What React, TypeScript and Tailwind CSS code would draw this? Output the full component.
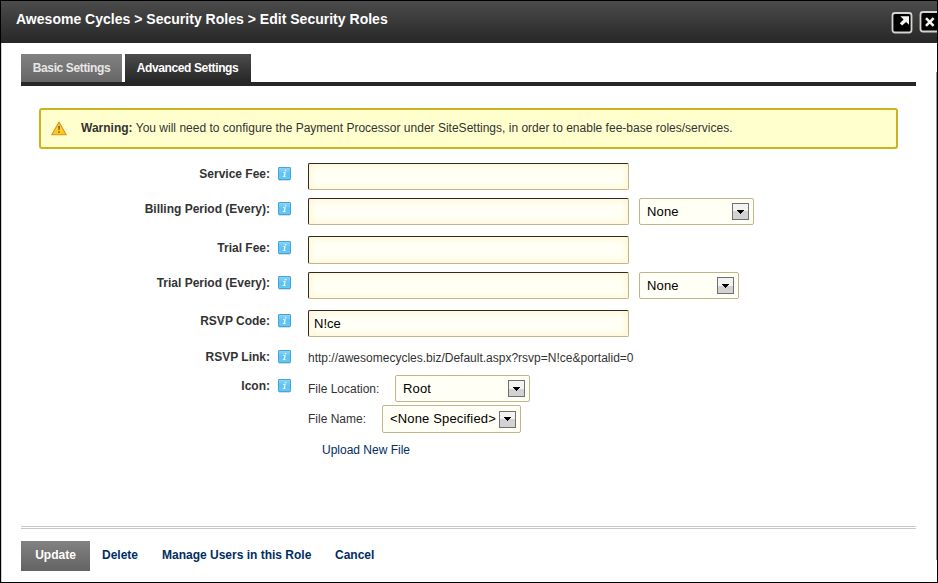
import type { ReactNode } from "react";

function InfoIcon() {
  return (
    <svg width="14" height="15" viewBox="0 0 14 15" className="mt-[2px] block shrink-0">
      <defs>
        <linearGradient id="info" x1="0" y1="0" x2="0" y2="1">
          <stop offset="0" stopColor="#8fd6f6" />
          <stop offset="0.5" stopColor="#5fc2f0" />
          <stop offset="1" stopColor="#62cbf5" />
        </linearGradient>
      </defs>
      <rect x="1" y="13" width="11" height="1" fill="#d9dcde" />
      <rect x="0.5" y="0.5" width="12" height="12" rx="0.5" fill="url(#info)" stroke="#45a5da" />
      <path d="M6.9 3h1.4v1.3H6.7zM5.1 5.3h2.7L6.9 9.2h1l-.2.8H4.6l.2-.8h.8l.7-3.1H4.9z" fill="#eaf8fe" />
    </svg>
  );
}

function Field({ label, className, labelClass = "h-[21px]", children }: { label: string; className: string; labelClass?: string; children: ReactNode }) {
  return (
    <div className={`flex items-start ${className}`}>
      <div className={`flex w-[271px] shrink-0 items-center justify-end gap-2 ${labelClass}`}>
        <span className="text-[12px] font-bold whitespace-nowrap text-[#333]">{label}</span>
        <InfoIcon />
      </div>
      {children}
    </div>
  );
}

function TextBox({ value = "", className = "h-[27px]" }: { value?: string; className?: string }) {
  return (
    <input
      readOnly
      value={value}
      aria-label="value"
      className={`ml-4 block w-[321px] shrink-0 rounded-[2px] border border-t-[#2b2b22] border-r-[#bfb78b] border-b-[#bfb78b] border-l-[#2b2b22] bg-[#fffff5] px-[5px] text-[13px] text-black shadow-[inset_0_0_7px_2px_#fff6d5] outline-none ${className}`}
    />
  );
}

function Dropdown({ value, className }: { value: string; className: string }) {
  return (
    <div className={`flex shrink-0 items-center justify-between rounded-[2px] border border-[#bfb78b] bg-[#fffff5] pr-1 pl-[7px] ${className}`}>
      <span className="text-[13px] tracking-[0.16px] whitespace-nowrap text-black">{value}</span>
      <span className="flex h-[17px] w-[17px] shrink-0 items-center justify-center border border-[#707070] bg-linear-to-b from-[#f3f3f3] from-50% to-[#d2d2d2] to-50%">
        <svg width="7" height="4" viewBox="0 0 7 4" className="block">
          <path d="M0 0h7v1H6v1H5v1H4v1H3V3H2V2H1V1H0z" fill="#000" />
        </svg>
      </span>
    </div>
  );
}

export default function App() {
  return (
    <div className="flex h-[583px] w-[938px] flex-col overflow-hidden border border-black bg-white font-['Liberation_Sans',Arial,sans-serif] text-[12px] text-[#333]">
      <header className="flex h-[42px] shrink-0 justify-between bg-linear-to-b from-[#4c4c4c] to-[#272727]">
        <h1 className="pt-[9px] pl-[15px] text-[14px] leading-[18px] font-bold tracking-[0.015px] whitespace-nowrap text-white">
          Awesome Cycles &gt; Security Roles &gt; Edit Security Roles
        </h1>
        <svg width="46" height="42" viewBox="0 0 46 42" className="block">
          <rect x="1.5" y="12" width="19" height="19.5" rx="2.5" fill="#000" stroke="#d4d4d0" strokeWidth="1.8" />
          <path d="M9.3 15.2H18v8.6l-2.9-2.8-4 3.6-2.3-2.3 3.8-3.9z" fill="#f4f4f0" />
          <rect x="29.5" y="11" width="21" height="19.5" rx="2.5" fill="#000" stroke="#d4d4d0" strokeWidth="1.8" />
          <path d="M35 17.2l7.6 7.6M42.6 17.2L35 24.8" stroke="#f4f4f0" strokeWidth="2.6" />
        </svg>
      </header>
      <div className="flex min-h-0 flex-1 border-l border-[#d0d0d0]">
        <div className="flex min-w-0 flex-1 flex-col pr-[20px] pl-[19px]">
          <nav className="mt-[11px] flex h-8 shrink-0 gap-[3px] border-b-4 border-[#272727] font-bold tracking-[-0.37px]">
            <div className="flex w-[101px] items-center justify-center bg-linear-to-b from-[#828282] to-[#666] text-[#e6e6e6]">Basic Settings</div>
            <div className="flex w-[126px] items-center justify-center bg-linear-to-b from-[#4c4c4c] to-[#272727] pr-px text-white">Advanced Settings</div>
          </nav>
          <div className="mx-[18px] mt-[22px] flex h-[41px] shrink-0 items-center rounded-[3px] border-2 border-[#cdb21f] bg-[#ffffcd] pl-[10px]">
            <svg width="16" height="15" viewBox="0 0 16 15" className="mr-[14px] block">
              <defs>
                <linearGradient id="warn" x1="0" y1="0" x2="0" y2="1">
                  <stop offset="0" stopColor="#f3b53a" />
                  <stop offset="0.5" stopColor="#ffd23a" />
                  <stop offset="1" stopColor="#fcc400" />
                </linearGradient>
              </defs>
              <path d="M8 1L15.2 13.8H.8z" fill="url(#warn)" stroke="#d79328" strokeWidth="1.1" strokeLinejoin="round" />
              <path d="M7.2 5h1.7l-.3 4.3H7.5zM7.2 10.3h1.6v1.5H7.2z" fill="#7a5a10" />
            </svg>
            <p className="pb-px tracking-[0.008px] whitespace-nowrap">
              <b>Warning:</b> You will need to configure the Payment Processor under SiteSettings, in order to enable fee-base roles/services.
            </p>
          </div>
          <main className="flex shrink-0 flex-col pt-[14px]">
            <Field label="Service Fee:" className="h-[35px]">
              <TextBox />
            </Field>
            <Field label="Billing Period (Every):" className="h-[38px]">
              <TextBox />
              <Dropdown value="None" className="ml-[10px] h-[27px] w-[115px]" />
            </Field>
            <Field label="Trial Fee:" className="h-[36px]" labelClass="h-[23px]">
              <TextBox className="h-[28px]" />
            </Field>
            <Field label="Trial Period (Every):" className="h-[38px]">
              <TextBox />
              <Dropdown value="None" className="ml-[10px] h-[27px] w-[100px]" />
            </Field>
            <Field label="RSVP Code:" className="h-[36px]">
              <TextBox value="N!ce" />
            </Field>
            <Field label="RSVP Link:" className="h-[29px]">
              <span className="ml-4 flex h-[23px] items-center">http://awesomecycles.biz/Default.aspx?rsvp=N!ce&amp;portalid=0</span>
            </Field>
            <Field label="Icon:" className="h-[90px]">
              <div className="ml-4 flex flex-col items-start">
                <div className="flex h-[30px] items-start">
                  <span className="flex h-[27px] w-[87px] items-center">File Location:</span>
                  <Dropdown value="Root" className="h-[27px] w-[135px]" />
                </div>
                <div className="flex h-[34px] items-start">
                  <span className="flex h-[27px] w-[74px] items-center">File Name:</span>
                  <Dropdown value="<None Specified>" className="h-[28px] w-[139px]" />
                </div>
                <a className="flex h-[21px] items-center pl-[14px] text-[#002e5f]">Upload New File</a>
              </div>
            </Field>
          </main>
          <footer className="mt-auto flex h-[56px] shrink-0 items-start border-t-[3px] border-double border-[#c8c8c8] pt-3 font-bold text-[#002e62]">
            <button className="h-[30px] w-[69px] bg-linear-to-b from-[#828282] to-[#636363] pb-[2px] font-bold text-white">Update</button>
            <a className="ml-3 flex h-[28px] w-[60px] items-center">Delete</a>
            <a className="flex h-[28px] w-[173px] items-center whitespace-nowrap">Manage Users in this Role</a>
            <a className="flex h-[28px] items-center">Cancel</a>
          </footer>
        </div>
        <div className="mt-[29px] mb-[22px] w-px bg-[#999]" />
      </div>
    </div>
  );
}
